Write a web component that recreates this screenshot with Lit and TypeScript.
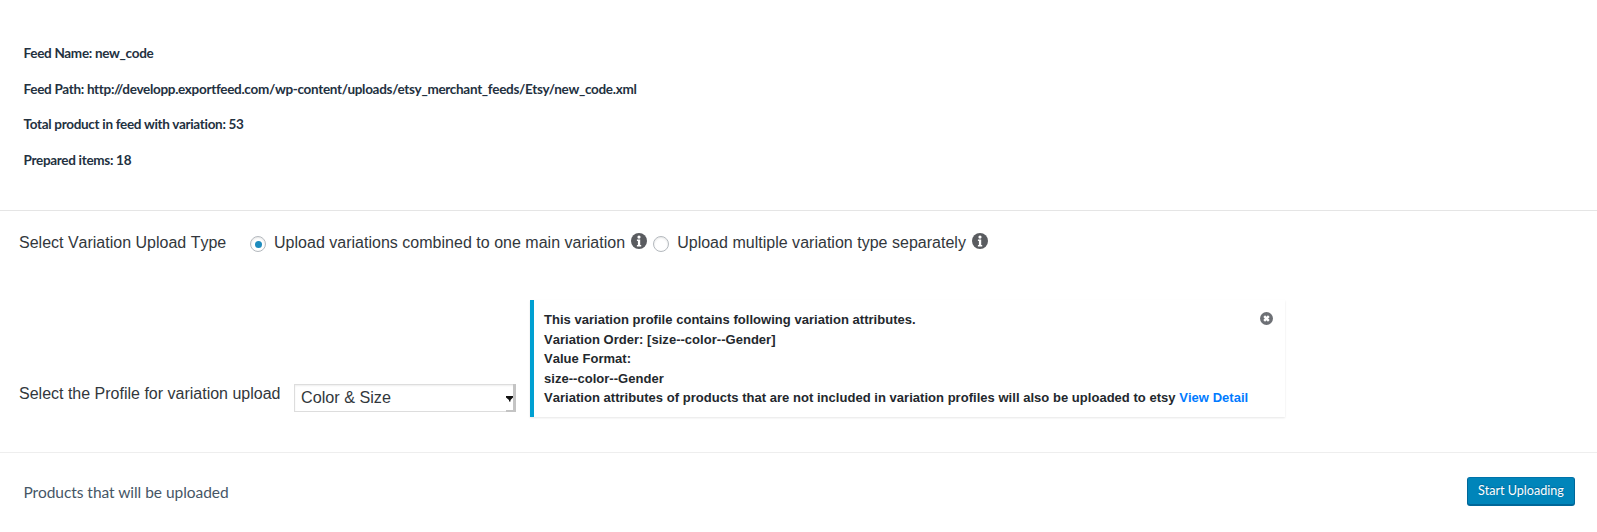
import { LitElement, html, css, svg } from "lit";
import { customElement } from "lit/decorators.js";

const info = svg`<svg class="info" viewBox="0 0 16 16" width="16" height="16"><circle cx="8" cy="8" r="8" fill="#5a5c60"/><circle cx="8" cy="4.100" r="1.600" fill="#fff"/><path d="M5.900 6.600h3.300v5.300h1v1.500H5.900v-1.500h1V8.100h-1z" fill="#fff"/></svg>`;

@customElement("app-root")
export class AppRoot extends LitElement {
  static styles = css`
    :host { display: block; width: 1597px; height: 532px; background: #fff; color: #23282d; font-family: "Liberation Sans", Arial, sans-serif; font-kerning: none; overflow: hidden; }
    .feed { height: 211px; box-sizing: border-box; padding: 43px 0 0 23.500px; border-bottom: 1px solid #e5e5e5; font-family: Lato, sans-serif; font-kerning: auto; font-size: 13.500px; letter-spacing: -0.300px; font-weight: 700; line-height: 21px; color: #23313f; display: flex; flex-direction: column; gap: 14.670px; }
    .feed p { margin: 0; }
    .type { display: flex; align-items: flex-start; height: 86px; padding: 21px 0 0 19px; box-sizing: border-box; font-size: 16px; line-height: 22px; color: #32373c; }
    .type-label { width: 231px; }
    .opt { display: flex; align-items: flex-start; letter-spacing: 0.015px; }
    .radio { width: 16px; height: 16px; box-sizing: border-box; border: 1px solid #b4b9be; border-radius: 50%; margin: 4px 8px 0 0; box-shadow: inset 0 1px 2px rgba(0,0,0,.1); display: flex; align-items: center; justify-content: center; flex: none; }
    .radio.on::after { content: ""; width: 7px; height: 7px; border-radius: 50%; background: #1e8cbe; }
    .info { display: block; margin: 1px 6px 0 6px; flex: none; }
    .opt + .opt .info { margin-right: 0; }
    .profile { display: flex; align-items: flex-end; height: 156px; box-sizing: border-box; padding: 4px 0 0 19px; border-bottom: 1px solid #eee; }
    .profile-label { font-size: 16px; line-height: 22px; color: #32373c; width: 275px; margin-bottom: 47px; }
    .select { position: relative; width: 222px; height: 28px; box-sizing: border-box; border: 1px solid #ddd; box-shadow: inset 0 1px 2px rgba(0,0,0,.07); font-size: 16.200px; line-height: 25px; padding-left: 6px; color: #32373c; margin: 0 0 40px; }
    .caret { position: absolute; right: -1px; top: -1px; }
    .notice { position: relative; margin: 0 0 35px 14px; width: 755px; height: 117px; box-sizing: border-box; border-left: 4px solid #00a0d2; padding: 10px; background: #fff; box-shadow: 0 1px 2px rgba(0,0,0,.1); font-size: 13px; letter-spacing: 0.030px; font-weight: 700; line-height: 19.500px; color: #23282d; }
    .notice a { color: #007bff; text-decoration: none; }
    .close { position: absolute; right: 12px; top: 12px; display: block; }
    .foot { display: flex; justify-content: space-between; align-items: center; height: 77px; padding: 0 22px 0 23.500px; box-sizing: border-box; }
    .foot span { font-family: Lato, sans-serif; font-kerning: auto; font-size: 15.500px; letter-spacing: -0.040px; color: #465666; }
    button { width: 108px; height: 29px; padding: 0; background: #0085ba; border: 1px solid #006799; border-bottom-width: 2px; border-color: #0073aa #006799 #006799; border-radius: 3px; color: #fff; font-family: Lato, sans-serif; font-kerning: auto; font-size: 12.600px; line-height: 26px; text-shadow: 0 -1px 1px #006799; }
  `;
  render() {
    return html`
      <div class="feed">
        <p>Feed Name: new_code</p>
        <p>Feed Path: http://developp.exportfeed.com/wp-content/uploads/etsy_merchant_feeds/Etsy/new_code.xml</p>
        <p>Total product in feed with variation: 53</p>
        <p>Prepared items: 18</p>
      </div>
      <div class="type">
        <div class="type-label">Select Variation Upload Type</div>
        <div class="opt"><span class="radio on"></span><span>Upload variations combined to one main variation</span>${info}</div>
        <div class="opt"><span class="radio"></span><span>Upload multiple variation type separately</span>${info}</div>
      </div>
      <div class="profile">
        <div class="profile-label">Select the Profile for variation upload</div>
        <div class="select">Color &amp; Size
          <svg class="caret" width="10" height="28" viewBox="0 0 10 28"><path d="M7 0H10V28H0V26H7z" fill="#c4c4c4"/><path d="M0 12H7V13.500L4.500 16V17.500H3V16L0 13.500z" fill="#111"/></svg>
        </div>
        <div class="notice">
          This variation profile contains following variation attributes.<br>
          Variation Order: [size--color--Gender]<br>
          Value Format:<br>
          size--color--Gender<br>
          Variation attributes of products that are not included in variation profiles will also be uploaded to etsy <a>View Detail</a>
          <svg class="close" width="13" height="13" viewBox="0 0 13 13"><circle cx="6.500" cy="6.500" r="6.500" fill="#6d7075"/><path d="M4.200 4.200l4.600 4.600M8.800 4.200l-4.600 4.600" stroke="#fff" stroke-width="2.400"/></svg>
        </div>
      </div>
      <div class="foot">
        <span>Products that will be uploaded</span>
        <button>Start Uploading</button>
      </div>
    `;
  }
}
